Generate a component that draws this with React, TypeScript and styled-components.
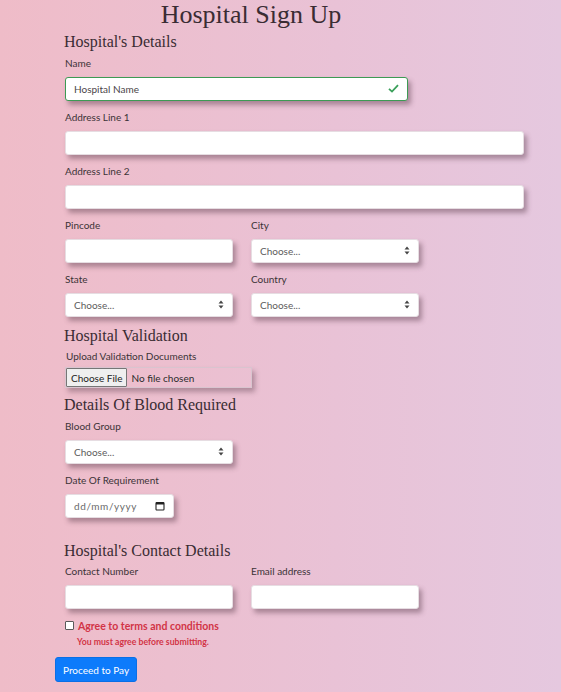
import React from "react";
import styled, { createGlobalStyle } from "styled-components";

const Global = createGlobalStyle`
  html, body { margin: 0; padding: 0; }
  body {
    min-height: 692px;
    background: linear-gradient(to right, #efbcc8 0%, #e9c2d6 60%, #e5c8df 100%);
    font-family: "Lato", "Open Sans", sans-serif;
    color: #3a3035;
  }
  * { box-sizing: border-box; }
`;

const Page = styled.div`
  padding: 0 0 8px 55px;
  width: 561px;
  min-height: 692px;
`;

const Title = styled.h1`
  margin: 0;
  width: 392px;
  text-align: center;
  font-family: "Liberation Serif", serif;
  font-weight: 400;
  font-size: 26px;
  line-height: 30px;
  color: #3a2c33;
`;

const Section = styled.div<{ $top?: number }>`
  padding-left: 9px;
  margin-top: ${(p) => p.$top ?? 0}px;
`;

const Heading = styled.h2`
  margin: 0 0 3.5px 0;
  font-family: "Liberation Serif", serif;
  font-weight: 400;
  font-size: 16px;
  line-height: 20px;
  color: #3a2c33;
`;

const Row = styled.div`
  display: flex;
  gap: 17px;
`;

const Field = styled.div<{ $w: number; $mb?: number }>`
  width: ${(p) => p.$w}px;
  margin-bottom: ${(p) => p.$mb ?? 9}px;
  padding-left: 1px;
`;

const Label = styled.div<{ $indent?: number; $mb?: number }>`
  font-size: 10px;
  line-height: 15px;
  margin-bottom: ${(p) => p.$mb ?? 6}px;
  color: #3b3337;
  padding-left: ${(p) => p.$indent ?? 0}px;
`;

const Box = styled.div<{ $valid?: boolean; $h?: number }>`
  position: relative;
  height: ${(p) => p.$h ?? 24}px;
  background: #fff;
  border: 1px solid ${(p) => (p.$valid ? "#3d9a54" : "#e6dde2")};
  border-radius: 3px;
  box-shadow: 3px 4px 5px rgba(90, 60, 75, 0.45);
  display: flex;
  align-items: center;
  padding: 0 8px;
  font-size: 10px;
  color: #4a4a4a;
`;

const BoxText = styled.span<{ $muted?: boolean }>`
  flex: 1;
  color: ${(p) => (p.$muted ? "#5c5c5c" : "#4a4548")};
  white-space: nowrap;
`;

const DateText = styled.span`
  flex: 1;
  color: #6a6a6a;
  letter-spacing: 0.6px;
`;

const FileBox = styled.div`
  width: 187px;
  height: 21px;
  display: flex;
  align-items: stretch;
  border: 1px solid #d9c4cf;
  box-shadow: 3px 4px 5px rgba(90, 60, 75, 0.4);
  font-size: 10px;
  margin-left: 1px;
  margin-bottom: 7px;
`;

const FileButton = styled.div`
  background: #efefef;
  border: 1px solid #767676;
  border-radius: 1px;
  padding: 0 4px;
  display: flex;
  align-items: center;
  color: #222;
`;

const FileText = styled.span`
  display: flex;
  align-items: center;
  padding-left: 4px;
  color: #2b2b2b;
`;

const CheckRow = styled.div`
  display: flex;
  align-items: center;
  height: 15px;
  padding-left: 1px;
`;

const CheckBox = styled.span`
  width: 9px;
  height: 9px;
  border: 1px solid #5a5a5a;
  border-radius: 1px;
  background: #fff;
  margin-right: 4px;
`;

const AgreeText = styled.span`
  color: #d23446;
  font-weight: 700;
  font-size: 10.5px;
`;

const Feedback = styled.div`
  color: #d23446;
  font-weight: 700;
  font-size: 8.7px;
  line-height: 12px;
  margin: 3px 0 9px 13px;
`;

const Button = styled.button`
  background: #0d7bfb;
  color: #fff;
  border: 1px solid #0a6fe6;
  border-radius: 3px;
  height: 25px;
  width: 82px;
  padding: 0;
  font-family: "Lato", "Open Sans", sans-serif;
  font-size: 10px;
`;

const Arrows = () => (
  <svg width="6" height="9" viewBox="0 0 6 9">
    <path d="M3 0.5 L5.5 3.5 H0.5 Z" fill="#444" />
    <path d="M3 8.5 L5.5 5.5 H0.5 Z" fill="#444" />
  </svg>
);

const Check = () => (
  <svg width="11" height="9" viewBox="0 0 11 9">
    <path d="M1 4.8 L4 7.6 L10 1.2" stroke="#3aa05a" strokeWidth="1.8" fill="none" />
  </svg>
);

const Calendar = () => (
  <svg width="10" height="10" viewBox="0 0 10 10">
    <rect x="1" y="1.5" width="8" height="7.5" rx="0.8" fill="none" stroke="#222" strokeWidth="1.1" />
    <rect x="1" y="1.5" width="8" height="2" fill="#222" />
  </svg>
);

const SelectField = ({ label, w = 169 }: { label: string; w?: number }) => (
  <Field $w={w}>
    <Label>{label}</Label>
    <Box>
      <BoxText $muted>Choose...</BoxText>
      <Arrows />
    </Box>
  </Field>
);

const TextField = ({ label, w }: { label: string; w: number }) => (
  <Field $w={w}>
    <Label>{label}</Label>
    <Box />
  </Field>
);

export default function App() {
  return (
    <>
      <Global />
      <Page>
        <Title>Hospital Sign Up</Title>
        <Section $top={2}>
          <Heading>Hospital's Details</Heading>
          <Field $w={344}>
            <Label>Name</Label>
            <Box $valid>
              <BoxText>Hospital Name</BoxText>
              <Check />
            </Box>
          </Field>
          <TextField label="Address Line 1" w={460} />
          <TextField label="Address Line 2" w={460} />
          <Row>
            <TextField label="Pincode" w={169} />
            <SelectField label="City" />
          </Row>
          <Row>
            <SelectField label="State" />
            <SelectField label="Country" />
          </Row>
        </Section>
        <Section>
          <Heading>Hospital Validation</Heading>
          <Label $indent={2} $mb={3}>Upload Validation Documents</Label>
          <FileBox>
            <FileButton>Choose File</FileButton>
            <FileText>No file chosen</FileText>
          </FileBox>
        </Section>
        <Section>
          <Heading>Details Of Blood Required</Heading>
          <SelectField label="Blood Group" />
          <Field $w={110}>
            <Label>Date Of Requirement</Label>
            <Box>
              <DateText>dd/mm/yyyy</DateText>
              <Calendar />
            </Box>
          </Field>
        </Section>
        <Section $top={23}>
          <Heading>Hospital's Contact Details</Heading>
          <Row>
            <TextField label="Contact Number" w={169} />
            <TextField label="Email address" w={169} />
          </Row>
          <CheckRow>
            <CheckBox />
            <AgreeText>Agree to terms and conditions</AgreeText>
          </CheckRow>
          <Feedback>You must agree before submitting.</Feedback>
        </Section>
        <Button>Proceed to Pay</Button>
      </Page>
    </>
  );
}
